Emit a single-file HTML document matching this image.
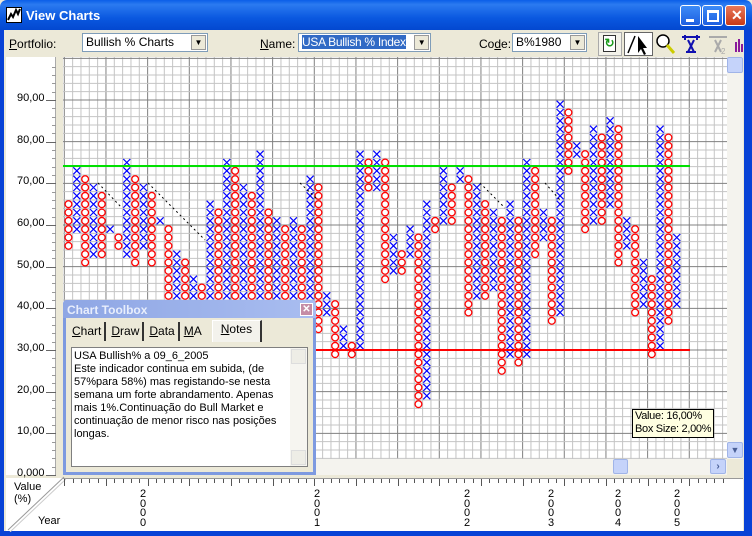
<!DOCTYPE html>
<html><head><meta charset="utf-8"><style>
*{margin:0;padding:0;box-sizing:border-box}
body{width:752px;height:536px;overflow:hidden;background:#ece9d8;font-family:"Liberation Sans",sans-serif;font-size:11px;position:relative}
.abs{position:absolute}
#title{left:0;top:0;width:752px;height:30px;background:linear-gradient(#0a5ee8,#2b7af0 15%,#0a58e0 60%,#0348d0);border-radius:7px 7px 0 0}
#title .t{left:26px;top:8px;color:#fff;font-weight:bold;font-size:13px}
.wb{top:5px;width:21px;height:21px;border:1px solid #fff;border-radius:3px;background:linear-gradient(#3d8bf7,#1d5fe0)}
#frameL{left:0;top:30px;width:4px;height:506px;background:#0842d6}
#frameR{left:744px;top:30px;width:8px;height:506px;background:#0842d6}
#frameB{left:0;top:531px;width:752px;height:5px;background:#0842d6}
.lbl{top:37px;font-size:12px}
.combo{top:33px;height:19px;background:#fff;border:1px solid #7f9db9;font-size:12px;padding:1px 3px;white-space:nowrap;overflow:hidden}
.combo .dd{position:absolute;right:1px;top:1px;width:15px;height:15px;background:#ece9d8;border:1px solid #999;font-size:8px;text-align:center;line-height:14px}
.tb{top:32px;width:24px;height:24px;border:1px solid #aaa;background:#f3f2ea}
#axisL{left:6px;top:57px;width:49px;height:418px;background:#fff}
.yl{left:17px;font-size:11px}
#bottom{left:63px;top:478px;width:680px;height:53px;background:#fff;border-top:1px solid #999}
.yr{font-size:11px;line-height:9.5px;width:8px;text-align:center}
#tbx{left:63px;top:300px;width:253px;height:175px;background:#7e9ae0;border-radius:4px 4px 0 0}
</style></head><body>
<div id="title" class="abs">
 <div class="abs" style="left:6px;top:7px;width:16px;height:16px;background:#fff;border:1px solid #000"><svg width="14" height="14"><path d="M1 12 L4 6 L6 9 L9 2 L11 6 L13 1" stroke="#000" stroke-width="2" fill="none"/></svg></div>
 <div class="t abs">View Charts</div>
 <div class="wb abs" style="left:680px"><div class="abs" style="left:5px;top:13px;width:8px;height:3px;background:#fff"></div></div>
 <div class="wb abs" style="left:702px"><div class="abs" style="left:4px;top:4px;width:12px;height:12px;border:2px solid #fff;border-top-width:3px"></div></div>
 <div class="wb abs" style="left:725px;background:linear-gradient(#e8785a,#c83a18)"><div class="abs" style="left:5px;top:1px;color:#fff;font-weight:bold;font-size:14px">✕</div></div>
</div>
<div id="frameL" class="abs"></div><div id="frameR" class="abs"></div><div id="frameB" class="abs"></div>

<div class="abs lbl" style="left:9px"><u>P</u>ortfolio:</div>
<div class="abs combo" style="left:82px;width:126px">Bullish % Charts<div class="dd">▼</div></div>
<div class="abs lbl" style="left:260px"><u>N</u>ame:</div>
<div class="abs combo" style="left:298px;width:133px;letter-spacing:-0.3px"><span style="background:#316ac5;color:#fff">USA Bullish % Index</span><div class="dd">▼</div></div>
<div class="abs lbl" style="left:479px">Co<u>d</u>e:</div>
<div class="abs combo" style="left:512px;width:75px">B%1980<div class="dd">▼</div></div>
<div class="abs tb" style="left:598px"><div class="abs" style="left:4px;top:2px;width:13px;height:17px;border:1px solid #333;background:#fff;color:#1a9a1a;font-size:12px;font-weight:bold;text-align:center">↻</div></div>
<div class="abs tb" style="left:624px;width:29px;background:#fff;border-color:#666"><svg width="28" height="24"><path d="M3 20 L10 3" stroke="#000" stroke-width="1.5"/><path d="M13 3 L13 20 L16 16 L19 22 L21 21 L18 15 L22 15 Z" fill="#000"/></svg></div>
<div class="abs tb" style="left:653px;border:none;background:none"><svg width="24" height="24"><circle cx="10" cy="9" r="6" stroke="#000" stroke-width="1.5" fill="#fff"/><path d="M14 13 L21 21" stroke="#cc0" stroke-width="3"/></svg></div>
<div class="abs tb" style="left:679px;border:none;background:none"><svg width="24" height="24"><path d="M3 5 H21 M6 3 V8 M18 3 V8 M9 8 L15 20 M15 8 L9 20 M7 20 H17" stroke="#1010b0" stroke-width="2"/></svg></div>
<div class="abs tb" style="left:706px;border:none;background:none"><svg width="24" height="24"><path d="M3 5 H21 M9 8 L15 20 M15 8 L9 20" stroke="#aaa" stroke-width="2"/><text x="15" y="22" font-size="8" fill="#aaa" font-family="Liberation Sans">2</text></svg></div>
<div class="abs" style="left:734px;top:36px"><svg width="10" height="16"><path d="M2 6V16M5 3V16M8 8V16" stroke="#8a1a9a" stroke-width="2"/></svg></div>

<div id="axisL" class="abs"></div>
<div class="abs" style="left:55px;top:57px;width:1px;height:418px;background:#aaa"></div>
<div id="yax"></div>

<svg class="abs" style="left:0;top:0" width="752" height="536" id="chart"></svg>

<div class="abs" style="left:727px;top:57px;width:16px;height:402px;background:#f4f3ee"></div>
<div class="abs" style="left:727px;top:57px;width:16px;height:16px;background:#c5d3fa;border:1px solid #a0b4e8;border-radius:2px"></div>
<div class="abs" style="left:727px;top:442px;width:16px;height:16px;background:#c5d3fa;border:1px solid #a0b4e8;border-radius:2px;color:#4a5f97;font-size:9px;text-align:center;line-height:14px">▼</div>
<div class="abs" style="left:63px;top:459px;width:664px;height:16px;background:#f4f3ee"></div>
<div class="abs" style="left:613px;top:459px;width:15px;height:15px;background:#c5d3fa;border:1px solid #a0b4e8;border-radius:2px"></div>
<div class="abs" style="left:710px;top:459px;width:16px;height:15px;background:#c5d3fa;border:1px solid #a0b4e8;border-radius:2px;color:#4a5f97;font-size:10px;text-align:center;line-height:13px;font-weight:bold">›</div>
<div class="abs" style="left:632px;top:409px;width:82px;height:29px;background:#ffffe1;border:1px solid #000;font-size:11px;padding:0 2px;line-height:13px;white-space:nowrap;letter-spacing:-0.3px">Value: 16,00%<br>Box Size: 2,00%</div>

<div id="bottom" class="abs"></div>
<div class="abs" style="left:6px;top:478px;width:57px;height:53px;background:#fff"></div>
<svg class="abs" style="left:6px;top:476px" width="60" height="56"><path d="M58 1 L2 54" stroke="#999"/><path d="M60 3 L4 56" stroke="#ccc"/></svg>
<div class="abs" style="left:14px;top:481px;font-size:11px;line-height:12px">Value<br>(%)</div>
<div class="abs" style="left:38px;top:515px;font-size:11px">Year</div>
<div id="years"></div>

<div id="tbx" class="abs">
 <div class="abs" style="left:0;top:0;width:253px;height:18px;background:linear-gradient(90deg,#8ea6e4,#a9bdf0);border-radius:4px 4px 0 0"></div>
 <div class="abs" style="left:4px;top:3px;color:#e8eefc;font-weight:bold;font-size:12px">Chart Toolbox</div>
 <div class="abs" style="left:237px;top:3px;width:13px;height:13px;background:#c58ca6;border:1px solid #fff;color:#fff;font-size:10px;text-align:center;line-height:11px;font-weight:bold">✕</div>
 <div class="abs" style="left:3px;top:18px;width:247px;height:154px;background:#ece9d8"></div>
 <div class="abs" style="left:6px;top:22px;font-size:12px;display:flex">
  <div style="padding:2px 3px;border-right:2px solid #333;height:19px"><u>C</u>hart</div>
  <div style="padding:2px 3px 2px 5px;border-right:2px solid #333;height:19px"><u>D</u>raw</div>
  <div style="padding:2px 3px 2px 5px;border-right:2px solid #333;height:19px"><u>D</u>ata</div>
  <div style="padding:2px 10px 2px 4px;height:19px"><u>M</u>A</div>
  <div style="padding:1px 8px 2px 8px;border-right:2px solid #333;border-left:1px solid #fff;border-top:1px solid #fff;height:22px;margin-top:-2px;background:#f3f2ec"><u>N</u>otes</div>
 </div>
 <div class="abs" style="left:8px;top:47px;width:237px;height:120px;background:#fff;border:1px solid #7f7f7f"></div>
 <div class="abs" style="left:11px;top:50px;width:210px;font-size:11px;line-height:13px">USA Bullish% a 09_6_2005<br>Este indicador continua em subida, (de 57%para 58%) mas registando-se nesta semana um forte abrandamento. Apenas mais 1%.Continuação do Bull Market e continuação de menor risco nas posições longas.</div>
 <div class="abs" style="left:227px;top:48px;width:17px;height:118px;background:#f6f5f0"></div>
 <div class="abs" style="left:228px;top:49px;width:15px;height:15px;background:#eeede6;border:1px solid #ddd"></div>
 <div class="abs" style="left:228px;top:150px;width:15px;height:15px;background:#eeede6;border:1px solid #ddd"></div>
</div>

<script>
var NS="http://www.w3.org/2000/svg",svg=document.getElementById('chart');
function el(t,a){var e=document.createElementNS(NS,t);for(var k in a)e.setAttribute(k,a[k]);svg.appendChild(e);return e;}
var X0=64.3,Y0=58.33,C=8.333;
el('rect',{x:63,y:57,width:664,height:402,fill:'#fff'});
for(var i=-1;i<81;i++){var x=X0+C*i;if(x<63||x>727)continue;el('line',{x1:x,y1:57,x2:x,y2:459,stroke:(i%5==0)?'#808080':'#c4c4c4','stroke-width':1});}
for(var r=-1;r<49;r++){var y=Y0+C*r;if(y<57||y>459)continue;el('line',{x1:63,y1:y,x2:727,y2:y,stroke:(r%5==0)?'#808080':'#c4c4c4','stroke-width':1});}
var cols=[[17,22],[13,20],[14,24],[15,23],[16,23],[20,20],[21,22],[12,23],[14,24],[15,22],[16,24],[19,19],[20,28],[23,30],[24,31],[26,32],[27,33],[17,32],[18,33],[12,31],[13,32],[15,31],[16,33],[11,30],[18,32],[19,31],[20,33],[19,31],[20,32],[14,30],[15,32],[28,30],[29,35],[32,34],[34,35],[11,34],[12,15],[11,15],[12,26],[21,25],[23,25],[20,23],[21,41],[17,40],[19,20],[13,19],[15,19],[13,14],[14,30],[15,28],[17,28],[18,27],[19,37],[17,35],[19,36],[12,35],[13,23],[18,21],[19,31],[5,30],[6,13],[10,11],[11,20],[8,19],[9,19],[7,17],[8,24],[19,22],[20,30],[24,29],[26,35],[8,34],[9,31],[21,29]];
cols.forEach(function(c,i){var cx=X0+C*i+C/2;for(var r=c[0];r<=c[1];r++){var cy=Y0+C*r+C/2;
 if(i%2==0){el('circle',{cx:cx,cy:cy,r:3.4,fill:'none',stroke:'#f00','stroke-width':1.3});}
 else{el('path',{d:'M'+(cx-3.5)+' '+(cy-3.5)+'L'+(cx+3.5)+' '+(cy+3.5)+'M'+(cx+3.5)+' '+(cy-3.5)+'L'+(cx-3.5)+' '+(cy+3.5),stroke:'#00f','stroke-width':1.2});}}});
el('line',{x1:63,y1:166,x2:690,y2:166,stroke:'#00e000','stroke-width':2});
el('line',{x1:63,y1:350,x2:690,y2:350,stroke:'#f00','stroke-width':2});
[[98,183,122,208],[148,183,205,240],[300,183,318,200],[480,183,505,208],[545,183,560,200]].forEach(function(d){el('line',{x1:d[0],y1:d[1],x2:d[2],y2:d[3],stroke:'#000','stroke-dasharray':'2,3'});});
var h='';for(var v=0;v<=90;v+=10){var y=475-v*4.1667;h+='<div class="abs yl" style="top:'+(y-8)+'px">'+(v==0?'0,000':v+',00')+'</div><div class="abs" style="left:46px;top:'+y+'px;width:10px;height:1px;background:#666"></div>';
 for(var k=1;k<5;k++){var yy=y-k*8.333;if(yy>57)h+='<div class="abs" style="left:52px;top:'+yy+'px;width:4px;height:1px;background:#999"></div>';}}
document.getElementById('yax').innerHTML=h;
var ys=[[143,'0'],[317,'1'],[467,'2'],[551,'3'],[618,'4'],[677,'5']],g='';
ys.forEach(function(a){g+='<div class="abs yr" style="left:'+(a[0]-4)+'px;top:490px">2<br>0<br>0<br>'+a[1]+'</div>';});
for(var i=0;i<80;i++){var x=X0+C*i;if(x>742)break;g+='<div class="abs" style="left:'+x+'px;top:479px;width:1px;height:'+(i%5==0?7:4)+'px;background:#555"></div>';}
document.getElementById('years').innerHTML=g;
</script>
</body></html>
